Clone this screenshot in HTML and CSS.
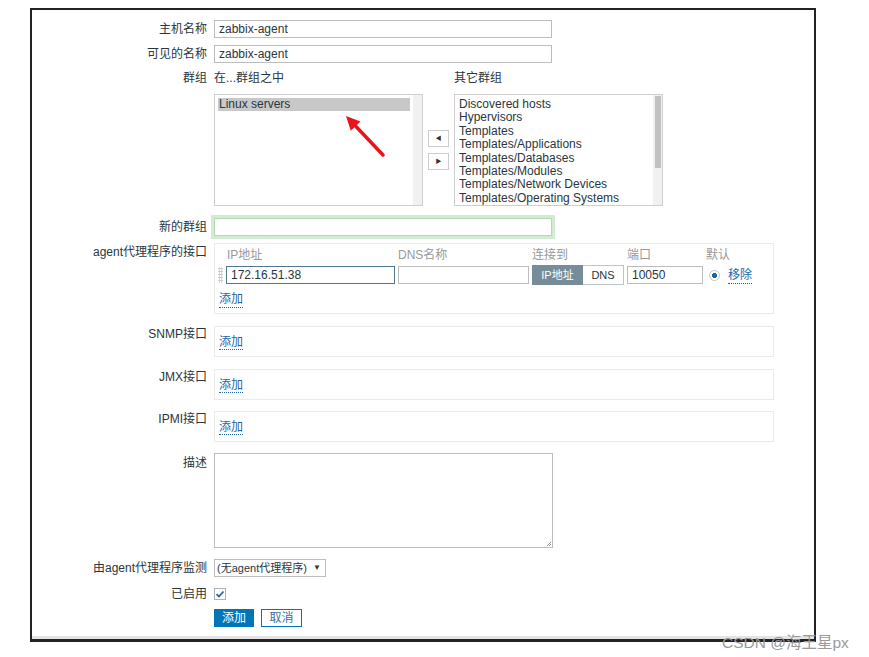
FILE: index.html
```html
<!DOCTYPE html>
<html lang="zh-CN">

<head>
    <meta charset="UTF-8">
    <meta name="viewport" content="width=device-width, initial-scale=1.0">
    <title>主机</title>
    <link rel="stylesheet" href="styles.css">
</head>

<body>
    <div class="frame">
        <div class="row first">
            <div class="label">主机名称</div>
            <div class="field wide">zabbix-agent</div>
        </div>
        <div class="row gap7">
            <div class="label">可见的名称</div>
            <div class="field wide">zabbix-agent</div>
        </div>

        <!-- 群组 -->
        <div class="row gap7">
            <div class="label lh16">群组</div>
            <div class="groups">
                <div class="groupCol">
                    <div class="groupHead">在...群组之中</div>
                    <div class="listbox">
                        <div class="item selected">Linux servers</div>
                        <div class="track"></div>
                    </div>
                </div>
                <div class="moveBtns">
                    <div class="moveBtn">&#9664;</div>
                    <div class="moveBtn">&#9654;</div>
                </div>
                <div class="groupCol">
                    <div class="groupHead">其它群组</div>
                    <div class="listbox">
                        <div class="item">Discovered hosts</div>
                        <div class="item">Hypervisors</div>
                        <div class="item">Templates</div>
                        <div class="item">Templates/Applications</div>
                        <div class="item">Templates/Databases</div>
                        <div class="item">Templates/Modules</div>
                        <div class="item">Templates/Network Devices</div>
                        <div class="item">Templates/Operating Systems</div>
                        <div class="track"><div class="thumb"></div></div>
                    </div>
                </div>
            </div>
        </div>

        <div class="row gap12">
            <div class="label">新的群组</div>
            <div class="field wide newGroup"></div>
        </div>

        <!-- 接口 -->
        <div class="row gap7">
            <div class="label lh16 pt1">agent代理程序的接口</div>
            <div class="ifBox agentBox">
                <div class="ifGrid ifHead">
                    <span></span>
                    <span>IP地址</span>
                    <span>DNS名称</span>
                    <span>连接到</span>
                    <span>端口</span>
                    <span>默认</span>
                </div>
                <div class="ifGrid ifRow">
                    <div class="handle"></div>
                    <div class="field focus">172.16.51.38</div>
                    <div class="field"></div>
                    <div class="seg">
                        <span class="segOn">IP地址</span>
                        <span class="segOff">DNS</span>
                    </div>
                    <div class="field">10050</div>
                    <div class="defCell">
                        <span class="radio"></span>
                        <a class="link">移除</a>
                    </div>
                </div>
                <a class="link addLink">添加</a>
            </div>
        </div>

        <div class="row gap12">
            <div class="label lh16">SNMP接口</div>
            <div class="ifBox"><a class="link">添加</a></div>
        </div>
        <div class="row gap12">
            <div class="label lh16">JMX接口</div>
            <div class="ifBox"><a class="link">添加</a></div>
        </div>
        <div class="row gap11">
            <div class="label lh16">IPMI接口</div>
            <div class="ifBox"><a class="link">添加</a></div>
        </div>

        <div class="row gap11">
            <div class="label lh16 pt2">描述</div>
            <div class="textarea"></div>
        </div>

        <div class="row gap11">
            <div class="label">由agent代理程序监测</div>
            <div class="select">
                <span class="selText">(无agent代理程序)</span>
                <span class="selArrow">&#9660;</span>
            </div>
        </div>

        <div class="row gap10">
            <div class="label lh14">已启用</div>
            <div class="checkbox">
                <svg width="10" height="10" viewBox="0 0 10 10">
                    <path d="M1.5 5.2 L4 7.5 L8.5 2.5" fill="none" stroke="#1f65a6" stroke-width="1.8" />
                </svg>
            </div>
        </div>

        <div class="row gap8">
            <div class="label"></div>
            <div class="btn primary">添加</div>
            <div class="btn alt">取消</div>
        </div>
    </div>

    <!-- 红色箭头 -->
    <svg class="arrow" width="60" height="60" viewBox="340 110 60 60">
        <line x1="383" y1="155" x2="356" y2="126.5" stroke="#e5161c" stroke-width="3.5" stroke-linecap="round" />
        <polygon points="346,116 360.5,121.5 350.8,130.8" fill="#e5161c" />
    </svg>

    <div class="watermark">CSDN @海王星px</div>
</body>

</html>
```

FILE: styles.css
```css
body {
    margin: 0;
    background: #fff;
    font-family: "Liberation Sans", "Noto Sans CJK SC", sans-serif;
    font-size: 12px;
    color: #2a363d;
}

.frame {
    box-sizing: border-box;
    width: 786px;
    height: 634px;
    margin: 8px 0 0 30px;
    padding-top: 10px;
    border: 2px solid #222;
    border-bottom-width: 3px;
    box-shadow: inset 0 -3px 0 #e4e4e4;
}

.row {
    display: flex;
    align-items: flex-start;
}

.gap7 { margin-top: 7px; }
.gap8 { margin-top: 8px; }
.gap10 { margin-top: 10px; }
.gap11 { margin-top: 11px; }
.gap12 { margin-top: 12px; }

.label {
    flex: none;
    width: 175px;
    margin-right: 7px;
    text-align: right;
    line-height: 18px;
    white-space: nowrap;
}

.lh16 { line-height: 16px; }
.lh14 { line-height: 14px; }
.pt1 { padding-top: 1px; }
.pt2 { padding-top: 2px; }

.field {
    box-sizing: border-box;
    height: 18px;
    padding: 0 4px;
    border: 1px solid #bdbdbd;
    background: #fff;
    line-height: 16px;
    white-space: nowrap;
    overflow: hidden;
}

.wide {
    width: 338px;
}

.newGroup {
    border-color: #b4d8b4;
    box-shadow: 0 0 0 3px #d3ead3;
}

/* 群组 */
.groups {
    display: flex;
}

.groupCol {
    width: 209px;
}

.groupHead {
    line-height: 16px;
    margin-bottom: 8px;
}

.listbox {
    position: relative;
    box-sizing: border-box;
    height: 112px;
    padding: 3px 4px 3px 3px;
    border: 1px solid #cfcfcf;
    line-height: 13.4px;
}

.item {
    padding-left: 1px;
    margin-right: 8px;
    white-space: nowrap;
}

.selected {
    background: #c8c8c8;
}

.track {
    position: absolute;
    top: 0;
    right: 0;
    bottom: 0;
    width: 9px;
    background: #f1f1f1;
}

.thumb {
    margin: 1px 1px 0 2px;
    height: 72px;
    background: #c1c1c1;
}

.moveBtns {
    display: flex;
    flex-direction: column;
    justify-content: center;
    gap: 6px;
    height: 112px;
    margin: 24px 5px 0;
}

.moveBtn {
    box-sizing: border-box;
    width: 21px;
    height: 17px;
    border: 1px solid #ccc;
    background: #fff;
    font-size: 6px;
    line-height: 15px;
    text-align: center;
    color: #333;
}

/* 接口 */
.ifBox {
    box-sizing: border-box;
    width: 560px;
    padding: 7px 4px 6px;
    border: 1px solid #ebebeb;
    line-height: 16px;
}

.agentBox {
    padding: 3px 0 5px 0;
}

.ifGrid {
    display: grid;
    grid-template-columns: 8px 169px 131px 92px 76px auto;
    column-gap: 3px;
    align-items: center;
}

.ifHead {
    color: #999;
}

.ifHead span:nth-child(2) {
    padding-left: 1px;
}

.ifRow {
    height: 20px;
    margin-top: 2px;
}

.handle {
    justify-self: end;
    width: 5px;
    height: 16px;
    background-image: radial-gradient(#c4c4c4 0.8px, transparent 1px);
    background-size: 2.5px 3px;
}

.focus {
    border-color: #4e7892;
}

.seg {
    display: flex;
    height: 20px;
    line-height: 18px;
    font-size: 11px;
}

.segOn {
    width: 51px;
    box-sizing: border-box;
    border: 1px solid #768d99;
    background: #768d99;
    color: #fff;
    text-align: center;
}

.segOff {
    width: 41px;
    box-sizing: border-box;
    border: 1px solid #b9c6cc;
    border-left: none;
    background: #fff;
    text-align: center;
}

.defCell {
    display: flex;
    align-items: center;
    gap: 8px;
    padding-left: 3px;
}

.radio {
    box-sizing: border-box;
    width: 11px;
    height: 11px;
    border: 1px solid #c4c4c4;
    border-radius: 50%;
    background: radial-gradient(#1f65a6 2.3px, #fff 2.8px);
}

.link {
    color: #1f65a6;
    border-bottom: 1px dotted #1f65a6;
    cursor: pointer;
}

.addLink {
    display: inline-block;
    margin: 7px 0 0 4px;
    line-height: 15px;
}

.textarea {
    box-sizing: border-box;
    width: 339px;
    height: 95px;
    border: 1px solid #bdbdbd;
    background:
        linear-gradient(135deg, transparent 70%, #999 70%, #999 76%, transparent 76%, transparent 85%, #999 85%, #999 91%, transparent 91%) right 1px bottom 1px / 8px 8px no-repeat,
        #fff;
}

.select {
    box-sizing: border-box;
    display: flex;
    align-items: center;
    justify-content: space-between;
    width: 112px;
    height: 18px;
    padding: 0 4px 0 2px;
    border: 1px solid #bdbdbd;
    line-height: 16px;
    overflow: hidden;
}

.selText {
    font-size: 11px;
    white-space: nowrap;
    overflow: hidden;
}

.selArrow {
    font-size: 8px;
    color: #333;
}

.checkbox {
    box-sizing: border-box;
    width: 12px;
    height: 12px;
    margin-top: 1px;
    border: 1px solid #aab4ba;
    display: flex;
    align-items: center;
    justify-content: center;
}

.btn {
    box-sizing: border-box;
    height: 18px;
    padding: 0 7px;
    border: 1px solid #0275b8;
    line-height: 16px;
    font-size: 12px;
}

.primary {
    width: 40px;
    background: #0275b8;
    color: #fff;
    text-align: center;
}

.alt {
    width: 41px;
    margin-left: 7px;
    background: #fff;
    color: #3d6f94;
    text-align: center;
}

.arrow {
    position: absolute;
    left: 340px;
    top: 110px;
}

.watermark {
    position: absolute;
    left: 722px;
    top: 630px;
    font-size: 15.5px;
    color: #9a9a9a;
    white-space: nowrap;
}
```
